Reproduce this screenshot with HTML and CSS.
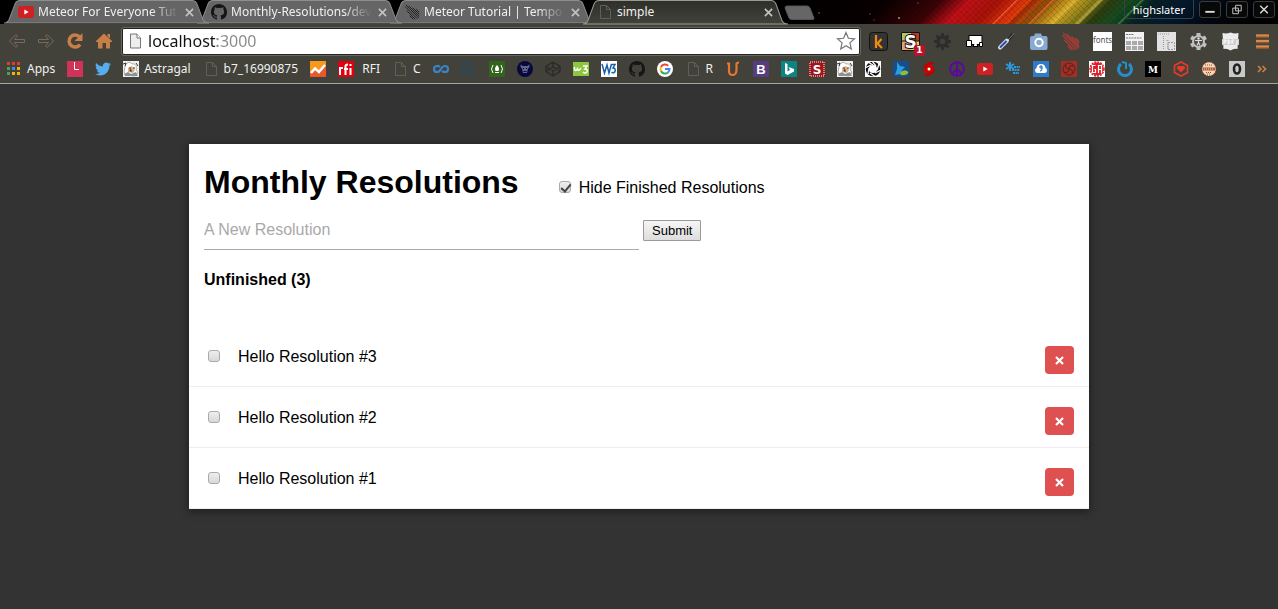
FILE: index.html
```html
<!DOCTYPE html>
<html lang="en">
<head>
<meta charset="utf-8">
<meta name="viewport" content="width=device-width, initial-scale=1">
<title>simple</title>
<link rel="stylesheet" href="styles.css">
</head>
<body>
<svg class="defs" width="0" height="0" aria-hidden="true">
  <defs>
    <linearGradient id="active-fill" x1="0" y1="0" x2="0" y2="1"><stop offset="0" stop-color="#2f2f2a"/><stop offset="1" stop-color="#42423b"/></linearGradient>
    <linearGradient id="sky" x1="0" y1="0" x2="488" y2="0" gradientUnits="userSpaceOnUse">
      <stop offset="0" stop-color="#000"/><stop offset=".2" stop-color="#080000"/><stop offset=".31" stop-color="#3a0306"/><stop offset=".37" stop-color="#c01018"/><stop offset=".43" stop-color="#a81208"/><stop offset=".49" stop-color="#e03a0c"/><stop offset=".53" stop-color="#8a4c08"/><stop offset=".58" stop-color="#d0a324"/><stop offset=".62" stop-color="#8e8018"/><stop offset=".66" stop-color="#2b3c10"/><stop offset=".7" stop-color="#174c20"/><stop offset=".75" stop-color="#072025"/><stop offset=".82" stop-color="#04172c"/><stop offset=".9" stop-color="#02070f"/><stop offset="1" stop-color="#000"/>
    </linearGradient>
    <pattern id="mesh" width="6" height="6" patternUnits="userSpaceOnUse"><path d="M0 3L3 0L6 3L3 6Z" fill="none" stroke="#000" stroke-opacity=".13"/></pattern>
    <symbol id="page" viewBox="0 0 16 16"><path d="M3.5 1.500H9.500L13.500 5.500V14.500H3.500ZM9.500 1.500V5.500H13.500" fill="none" stroke="#60605a"/></symbol>
    <symbol id="github" viewBox="0 0 16 16"><path fill="#151515" d="M8 0C3.580 0 0 3.580 0 8c0 3.540 2.290 6.530 5.470 7.590.4.070.55-.17.55-.38 0-.19-.01-.82-.01-1.490-2.010.37-2.530-.49-2.690-.94-.09-.23-.48-.94-.82-1.130-.28-.15-.68-.52-.01-.53.63-.01 1.080.58 1.230.82.72 1.210 1.870.87 2.330.66.070-.52.28-.87.51-1.070-1.780-.2-3.640-.89-3.640-3.950 0-.87.31-1.590.82-2.150-.08-.2-.36-1.020.08-2.120 0 0 .67-.21 2.200.82a7.600 7.600 0 014 0c1.530-1.040 2.200-.82 2.200-.82.44 1.100.16 1.920.08 2.120.51.56.82 1.270.82 2.150 0 3.070-1.870 3.750-3.650 3.950.29.25.54.73.54 1.480 0 1.070-.01 1.930-.01 2.200 0 .21.15.46.55.38A8.010 8.010 0 0016 8c0-4.420-3.580-8-8-8z"/></symbol>
    <symbol id="youtube" viewBox="0 0 16 16"><rect y="2" width="16" height="12" rx="2.500" fill="#cf2124"/><path d="M6.300 5.500L10.700 8L6.300 10.500Z" fill="#fff"/></symbol>
    <symbol id="meteor" viewBox="0 0 16 16"><path d="M2 1L14.500 13.500M5 2L15 12M9 4L15 10M12.500 5.500L15 8M1.500 3L13 14.500M3 7L11 15M6 12L9 15" fill="none" stroke="currentColor" stroke-linecap="round"/></symbol>
    <symbol id="close" viewBox="0 0 10 10"><path d="M1 1L9 9M9 1L1 9" fill="none" stroke="#c3c3c0" stroke-width="1.800"/></symbol>
    <symbol id="astragal" viewBox="0 0 16 16"><rect width="16" height="16" fill="#f4f2ee"/><path d="M2 6C3 1 7 0 9 3C13 2 14 6 13 8L15 12L12 15L3 14L1 11Z" fill="#fff" stroke="#777" stroke-width=".6"/><path d="M5 7L9 5L12 9L10 12L5 11Z" fill="#dcae82"/><path d="M1 13L5 11L8 13L13 11L15 15H2Z" fill="#8a919b"/><path d="M0 3L3 2L2 5M6 7H8M10 7H12M8 8L7 10H9M13 2L15 5" stroke="#222" stroke-width=".9" fill="none"/></symbol>
    <symbol id="tab-shape" viewBox="0 0 206 25" preserveAspectRatio="none"><path d="M1 24C4 24 5 22.500 6 20.500L12 4C13 1.500 14 .5 17 .5H188C191 .5 192 1.500 193 4L199 20.500C200 22.500 201 24 205 24Z"/></symbol>
  </defs>
</svg>

<header class="browser">
  <div class="tabstrip">
    <svg class="sky" viewBox="0 0 488 24" preserveAspectRatio="none" aria-hidden="true">
      <g transform="skewX(-45)"><rect x="10" width="520" height="24" fill="url(#sky)"/>
      <path d="M226 0h2v24h-2zM262 0h2v24h-2z" fill="#ff5a38" opacity=".85"/><path d="M242 0h6v24h-6z" fill="#4e0804" opacity=".3"/><path d="M284 0h3v24h-3zM308 0h5v24h-5z" fill="#ffdf62" opacity=".45"/><path d="M351 0h3v24h-3z" fill="#4c9a45" opacity=".6"/></g>
      <rect x="115" width="270" height="24" fill="url(#mesh)"/>
      <g fill="#999"><circle cx="29" cy="13" r=".7"/><circle cx="80" cy="14" r=".6"/><circle cx="109" cy="18" r="1"/><circle cx="128" cy="3" r=".6"/><circle cx="84" cy="20" r=".5"/></g>
    </svg>
    <div class="tab tab-first"><svg class="tab-bg"><use href="#tab-shape"/></svg><svg class="ico"><use href="#youtube"/></svg><span class="tab-title tab-title-long">Meteor For Everyone Tut</span><button class="tab-close" aria-label="Close tab"><svg><use href="#close"/></svg></button></div>
    <div class="tab tab-second"><svg class="tab-bg"><use href="#tab-shape"/></svg><svg class="ico"><use href="#github"/></svg><span class="tab-title tab-title-long">Monthly-Resolutions/dev</span><button class="tab-close" aria-label="Close tab"><svg><use href="#close"/></svg></button></div>
    <div class="tab"><svg class="tab-bg"><use href="#tab-shape"/></svg><svg class="ico ico-dark"><use href="#meteor"/></svg><span class="tab-title tab-title-long">Meteor Tutorial | Tempo</span><button class="tab-close" aria-label="Close tab"><svg><use href="#close"/></svg></button></div>
    <div class="tab tab-active"><svg class="tab-bg"><use href="#tab-shape"/></svg><svg class="ico"><use href="#page"/></svg><span class="tab-title">simple</span><button class="tab-close" aria-label="Close tab"><svg><use href="#close"/></svg></button></div>
    <button class="new-tab" aria-label="New tab"><svg viewBox="0 0 32 16"><path d="M3 1H23Q25 1 26 3L30 13Q30 14.500 29 14.500H8Q6 14.500 5 13L1 3Q1 1 3 1Z" fill="#666" stroke="#555"/></svg></button>
    <div class="window-controls">
      <button class="user">highslater</button>
      <button class="win" aria-label="Minimize"><svg viewBox="0 0 20 16"><path d="M5 10.500H15" stroke="#ddd" stroke-width="2"/></svg></button>
      <button class="win" aria-label="Restore"><svg viewBox="0 0 20 16"><path d="M8.500 3.500H14.500V9.500H8.500ZM5.500 6.500H11.500V12.500H5.500Z" fill="none" stroke="#ccc"/></svg></button>
      <button class="win" aria-label="Close"><svg viewBox="0 0 20 16"><path d="M6 4L14 12M14 4L6 12" stroke="#ddd" stroke-width="1.500"/></svg></button>
    </div>
  </div>

  <div class="toolbar">
    <div class="nav">
      <button aria-label="Back"><svg viewBox="0 0 18 18"><path d="M1.500 9L8 2.500L9.500 4L6.500 7.500H16.500V10.500H6.500L9.500 14L8 15.500Z" fill="none" stroke="#77695c"/></svg></button>
      <button aria-label="Forward"><svg viewBox="0 0 18 18"><path d="M16.500 9L10 2.500L8.500 4L11.500 7.500H1.500V10.500H11.500L8.500 14L10 15.500Z" fill="none" stroke="#77695c"/></svg></button>
      <button aria-label="Reload"><svg viewBox="0 0 18 18"><path d="M14 12.500A6 6 0 1 1 13.500 5" fill="none" stroke="#c87e46" stroke-width="3.500"/><path d="M16.500 1V9H8.500Z" fill="#c87e46"/></svg></button>
      <button aria-label="Home"><svg viewBox="0 0 18 18"><path d="M9 1.500L17 9V10H15V16.500H11V11H7.500V16.500H3V10H1V9ZM12.500 2H15V6.500L12.500 4Z" fill="#c87e46"/></svg></button>
    </div>
    <div class="omnibox">
      <svg class="ico" viewBox="0 0 16 16"><path d="M2.500 1H9L12.500 5V15H2.500Z" fill="#eee" stroke="#777"/><path d="M9 1V5H12.500" fill="#fff" stroke="#777"/></svg>
      <input class="url" type="text" value="localhost:3000" aria-label="Address">
      <button class="star" aria-label="Bookmark this page"><svg viewBox="0 0 20 20"><path d="M10 1.500L12.400 7.300L18.500 7.800L13.900 11.900L15.300 18L10 14.800L4.700 18L6.100 11.900L1.500 7.800L7.600 7.300Z" fill="#fff" stroke="#777" stroke-width="1.200"/></svg></button>
    </div>
    <div class="extensions">
      <button aria-label="k"><svg viewBox="0 0 19 19"><rect x=".5" y=".5" width="18" height="18" rx="3" fill="#333" stroke="#111"/><path d="M7 3V16M12.500 7L8.500 11.500L13 16" fill="none" stroke="#f08a10" stroke-width="2.200"/></svg></button>
      <button class="with-badge" aria-label="S"><svg viewBox="0 0 19 19"><path fill="#b5c45c" d="M0 0H10V9H0Z"/><path fill="#b53b2e" d="M10 0H19V9H10Z"/><path fill="#e2a477" d="M0 9H10V19H0Z"/><path fill="#e8d33c" d="M10 9H19V19H10Z"/><path d="M.5.500H18.500V18.500H.5ZM0 9H19" fill="none" stroke="#111"/><text x="9.500" y="15.500" text-anchor="middle" font-family="DejaVu Sans" font-size="17" font-weight="bold" fill="#fff" stroke="#111" stroke-width="2" paint-order="stroke">S</text></svg><span class="badge">1</span></button>
      <button aria-label="Settings"><svg viewBox="0 0 19 19"><circle cx="9.500" cy="9.500" r="4.500" fill="none" stroke="#2d2d2b" stroke-width="3.500"/><path d="M9.500 1V4M9.500 15V18M1 9.500H4M15 9.500H18M3.500 3.500L6 6M13 13L15.500 15.500M15.500 3.500L13 6M6 13L3.500 15.500" stroke="#2d2d2b" stroke-width="3"/></svg></button>
      <button aria-label="Devices"><svg viewBox="0 0 19 19"><path d="M4 3.500H17V12.500H12L13 14.500H8L9 12.500H4Z" fill="#fff" stroke="#000"/><path d="M1.500 8.500H6.500V14.500H1.500Z" fill="#fff" stroke="#000"/><path d="M14.500 10.500H17.500V14.500H14.500Z" fill="#fff" stroke="#000"/></svg></button>
      <button aria-label="Color picker"><svg viewBox="0 0 19 19"><path d="M11 8L16 2" stroke="#262626" stroke-width="3"/><path d="M9.500 9.500L17 1.500" stroke="#82868c"/><path d="M3 15.500L10 8.500" stroke="#d8dde8" stroke-width="4" stroke-linecap="round"/><path d="M3 15.500L9.500 9" stroke="#2948b4" stroke-width="2"/></svg></button>
      <button aria-label="Screenshot"><svg viewBox="0 0 19 19"><path d="M5 4L6 1.500H12L13 4H17Q18.500 4 18.500 6V16Q18.500 18 17 18H3Q1 18 1 16V6Q1 4 3 4Z" fill="#88aad0"/><circle cx="10" cy="10.500" r="3.700" fill="none" stroke="#fff" stroke-width="2"/></svg></button>
      <button class="ico-red" aria-label="Meteor"><svg><use href="#meteor"/></svg></button>
      <button aria-label="fonts"><svg viewBox="0 0 19 19"><rect width="19" height="19" fill="#fff"/><text x="9.500" y="11" text-anchor="middle" font-family="Noto Sans" font-size="8" fill="#555">fonts</text></svg></button>
      <button aria-label="New tab page"><svg viewBox="0 0 19 19"><rect width="19" height="19" fill="#f2f2f2"/><path d="M1 2.500H9M1 6H17" stroke="#777" stroke-dasharray="2 .7"/><path d="M1 9H6V13H1ZM7 9H12V13H7ZM13 9H18V13H13ZM1 14H6V18H1ZM7 14H12V18H7ZM13 14H18V18H13Z" fill="#aaa"/></svg></button>
      <button aria-label="Ruler"><svg viewBox="0 0 19 19"><rect width="19" height="19" fill="#e2e2e2"/><path d="M1 2H12M6.500 4V18M10 8V10M11 8V17" stroke="#999" stroke-dasharray="1 1"/><path d="M11 10.500H17.500V17.500H11Z" fill="none" stroke="#999" stroke-dasharray="2 1"/></svg></button>
      <button aria-label="Accessibility"><svg viewBox="0 0 19 19"><path d="M9.500 1V18M2.100 5.200L16.900 13.800M16.900 5.200L2.100 13.800" stroke="#c0c0c0" stroke-width="4"/><circle cx="9.500" cy="9.500" r="5.500" fill="#4c4c4a" stroke="#c0c0c0" stroke-width="2"/><circle cx="9.500" cy="6.500" r="1.200" fill="#ddd"/><path d="M6 8.500H13M9.500 8V10.500L8 13.500M9.500 10.500L11 13.500" fill="none" stroke="#ddd" stroke-width="1.200"/></svg></button>
      <button aria-label="PDF.JS"><svg viewBox="0 0 19 19"><path d="M1.500 1Q5.500 2 9.500 .5Q13.500 2 17.500 1L16.500 17Q13 16 9.500 18.500Q6 16 2.500 17Z" fill="#ececec"/><rect x="1" y="7" width="17" height="6" fill="#d0d0d0"/><path d="M3 12V8H5V10H3M7 8V12Q9 12 9 10T7 8M11 12V8H13M11 10H12.500M16 8V12H14.500" fill="none" stroke="#fff" stroke-width=".9"/></svg></button>
      <button aria-label="Menu"><svg viewBox="0 0 19 19"><path d="M3 4H16M3 9.500H16M3 15H16" stroke="#8a542c" stroke-width="4"/><path d="M3 3.500H16M3 9H16M3 14.500H16" stroke="#d78a4e" stroke-width="2"/></svg></button>
    </div>
  </div>

  <nav class="bookmarks" aria-label="Bookmarks">
    <a href="#"><svg class="ico" viewBox="0 0 16 16"><path d="M1 1H4V4H1ZM6 1H9V4H6ZM11 1H14V4H11Z" fill="#e33b2e"/><path d="M1 6H4V9H1ZM1 11H4V14H1Z" fill="#3da755"/><path d="M6 6H9V9H6Z" fill="#4688f1"/><path d="M11 6H14V9H11ZM6 11H9V14H6ZM11 11H14V14H11Z" fill="#f4b400"/></svg>Apps</a>
    <a href="#" aria-label="L"><svg class="ico" viewBox="0 0 16 16"><path fill="#d13358" d="M0 0H16V16H0Z"/><path d="M7.500 1V8.500H12" fill="none" stroke="#fff"/></svg></a>
    <a href="#" aria-label="Twitter"><svg class="ico" viewBox="0 0 24 24"><path fill="#55acee" d="M23.950 4.570a10 10 0 01-2.820.77 4.960 4.960 0 002.160-2.720c-.95.560-2 .96-3.130 1.190a4.920 4.920 0 00-8.380 4.480C7.690 8.090 4.070 6.130 1.640 3.160a4.820 4.820 0 00-.67 2.470c0 1.710.87 3.210 2.190 4.100a4.900 4.900 0 01-2.230-.62v.06a4.920 4.920 0 003.950 4.830 5 5 0 01-2.210.08 4.940 4.940 0 004.600 3.420A9.870 9.870 0 010 19.540a13.990 13.990 0 007.550 2.210c9.050 0 14-7.500 14-13.990l-.02-.63a10 10 0 002.460-2.550z"/></svg></a>
    <a href="#"><svg class="ico"><use href="#astragal"/></svg>Astragal</a>
    <a href="#"><svg class="ico"><use href="#page"/></svg>b7_16990875</a>
    <a href="#" aria-label="Analytics"><svg class="ico" viewBox="0 0 16 16"><path d="M0 0H16V16H0Z" fill="#f8981d"/><path d="M0 12L5 8L9 11L16 4V16H0Z" fill="#e8582a"/><path d="M1 12L5 7.500L9 11L15 4" fill="none" stroke="#fff" stroke-width="2.500"/></svg></a>
    <a href="#"><svg class="ico" viewBox="0 0 16 16"><path d="M0 0H16V16H0Z" fill="#e2000f"/><path d="M2 14V7H5M7.500 14V5Q7.500 3.500 10 3.500M6 8H10M12.500 7V14M12.500 3V5" fill="none" stroke="#fff" stroke-width="2"/></svg>&nbsp;RFI</a>
    <a href="#"><svg class="ico"><use href="#page"/></svg>C</a>
    <a href="#" aria-label="Coursera"><svg class="ico" viewBox="0 0 16 16"><path d="M7 6Q5.500 4.800 4 5A3 3 0 0 0 4 11Q6.500 11 8 8T12 5A3 3 0 0 1 12 11Q10.500 11 9 10" fill="none" stroke="#3a83c6" stroke-width="2.200"/></svg></a>
    <a href="#" aria-label="Codecademy"><svg class="ico" viewBox="0 0 16 16"><path d="M1.500 1.500H10.500V13.500H1.500ZM8 5.500H4.500V10.500H8M12 13.500H16" fill="none" stroke="#204a68" stroke-width="1.200"/></svg></a>
    <a href="#" aria-label="Free Code Camp"><svg class="ico" viewBox="0 0 16 16"><path d="M0 0H16V16H0Z" fill="#33641c"/><path d="M4 4Q1 8 4 12M12 4Q15 8 12 12M6 11.500H10" fill="none" stroke="#fff"/><path d="M8 4Q11 7 9.500 10H6.500Q5 7 8 4Z" fill="#fff"/></svg></a>
    <a href="#" aria-label="Bull"><svg class="ico" viewBox="0 0 16 16"><circle cx="8" cy="8" r="8" fill="#08083d"/><path d="M4 3Q4 5 6 5H10Q12 5 12 3Q13.500 6 11 7.500L10 12H6L5 7.500Q2.500 6 4 3Z" fill="#63638c"/><path d="M6 7.500H7M9 7.500H10M6.500 10.500H9.500" stroke="#08083d"/></svg></a>
    <a href="#" aria-label="CodePen"><svg class="ico" viewBox="0 0 16 16"><path d="M8 1L15 5.500V10.500L8 15L1 10.500V5.500ZM1 5.500L8 10L15 5.500M1 10.500L8 6L15 10.500M8 1V6M8 10V15" fill="none" stroke="#2b2b29" stroke-width="1.400"/></svg></a>
    <a href="#" aria-label="W3Schools"><svg class="ico" viewBox="0 0 16 16"><path d="M0 1H16V15H0Z" fill="#8dc63f"/><path d="M1.500 6V8.500Q3 10.500 4.500 8V6.500V8.500Q6 10.500 8 7M10 5H14L12 8Q15 8 14 11Q12 13 10 11" fill="none" stroke="#fff" stroke-width="1.500"/></svg></a>
    <a href="#" aria-label="W3C"><svg class="ico" viewBox="0 0 16 16"><path fill="#fff" d="M0 0H16V16H0Z"/><path d="M1 3L3.500 12L6 4L8 12L10.500 3M10.500 3.500H14L12 7Q15 7 14 10.500Q12.500 13 10.500 11" fill="none" stroke="#1761a8" stroke-width="1.500"/></svg></a>
    <a href="#" aria-label="GitHub"><svg class="ico"><use href="#github"/></svg></a>
    <a href="#" aria-label="Google"><svg class="ico" viewBox="0 0 16 16"><circle cx="8" cy="8" r="8" fill="#fff"/><g fill="none" stroke-width="2"><path d="M11.200 4.800A4.500 4.500 0 0 0 4 6" stroke="#ea4335"/><path d="M4 6A4.500 4.500 0 0 0 4 10" stroke="#fbbc05"/><path d="M4 10A4.500 4.500 0 0 0 11 11.400" stroke="#34a853"/><path d="M8 8H12.500Q12.500 10 11 11.400" stroke="#4285f4"/></g></svg></a>
    <a href="#"><svg class="ico"><use href="#page"/></svg>R</a>
    <a href="#" aria-label="Udemy"><svg class="ico" viewBox="0 0 16 16"><path d="M2 2.500H4V10Q4 14 7.500 14T11.500 9.500V3Q11.500 1.500 14 1.500" fill="none" stroke="#e8762c" stroke-width="2.200"/></svg></a>
    <a href="#" aria-label="Bootstrap"><svg class="ico" viewBox="0 0 16 16"><rect width="16" height="16" rx="1" fill="#573d7f"/><text x="8" y="12.500" text-anchor="middle" font-family="Liberation Sans" font-size="13" font-weight="bold" fill="#fff">B</text></svg></a>
    <a href="#" aria-label="Bing"><svg class="ico" viewBox="0 0 16 16"><path fill="#0c8484" d="M0 0H16V16H0Z"/><path d="M4 2L6.500 3V10.500L9 9L7.500 6L13 8V10.500L6.500 14L4 12.500Z" fill="#fff"/></svg></a>
    <a href="#" aria-label="S"><svg class="ico" viewBox="0 0 16 16"><path fill="#9d161c" d="M0 0H16V16H0Z"/><path d="M1 1H15V15H1Z" fill="none" stroke="#deb1ac" stroke-width="1.500" stroke-dasharray="1 1"/><text x="8" y="12.500" text-anchor="middle" font-family="DejaVu Sans" font-size="12" font-weight="bold" fill="#fff">S</text></svg></a>
    <a href="#" aria-label="Astragal"><svg class="ico"><use href="#astragal"/></svg></a>
    <a href="#" aria-label="Aperture"><svg class="ico" viewBox="0 0 16 16"><path fill="#fff" d="M0 0H16V16H0Z"/><circle cx="8" cy="8" r="5.700" fill="none" stroke="#111" stroke-width="3.200"/><path d="M7 0L11 5M14 3L12 9M16 9L10 12M11 16L5 12M3 13L4 7M0 7L6 4M3 1L8 4" stroke="#fff" stroke-width="1.300"/></svg></a>
    <a href="#" aria-label="Bird"><svg class="ico" viewBox="0 0 16 16"><path fill="#144f8d" d="M0 0H16V16H0Z"/><path d="M4 1L7 5L12 6L9 9L8 13L2 14L4 8Z" fill="#2d9de0"/><path d="M7 12Q11 7 15.500 11Q14 15 8 14Z" fill="#8cbe3a"/></svg></a>
    <a href="#" aria-label="Storm"><svg class="ico" viewBox="0 0 16 16"><circle cx="8" cy="8" r="5" fill="#d40000"/><path d="M12.500 2Q6 0 2.500 7Q6 3 12.500 2ZM3.500 14Q10 16 13.500 9Q10 13 3.500 14Z" fill="#c00000" stroke="#c00000"/><circle cx="8" cy="8" r="1.500" fill="#fff"/></svg></a>
    <a href="#" aria-label="Peace"><svg class="ico" viewBox="0 0 16 16"><path d="M8 1V15M8 8L3 13M8 8L13 13" stroke="#5a0a9c" stroke-width="2"/><circle cx="8" cy="8" r="6.800" fill="none" stroke="#5a0a9c" stroke-width="2"/></svg></a>
    <a href="#" aria-label="YouTube"><svg class="ico"><use href="#youtube"/></svg></a>
    <a href="#" aria-label="Flower"><svg class="ico" viewBox="0 0 16 16"><path d="M5 1V10M1 3L9 8M1 8L9 3" stroke="#2a98db" stroke-width="2"/><path d="M9 6H15M7 9H15M8 12H14" stroke="#2a98db" stroke-width="2.200" stroke-dasharray="2 .6"/></svg></a>
    <a href="#" aria-label="Cloud 9"><svg class="ico" viewBox="0 0 16 16"><path fill="#2e7bcb" d="M0 0H16V16H0Z"/><path d="M4 12A2.700 2.700 0 0 1 3.500 7Q4 3 8 3T12.500 7A2.700 2.700 0 0 1 12 12Z" fill="#fff"/><path d="M9 7H7V5H9V8Q9 10 7 10" fill="none" stroke="#1964af"/></svg></a>
    <a href="#" aria-label="Spiral"><svg class="ico" viewBox="0 0 16 16"><path fill="#a52d24" d="M0 0H16V16H0Z"/><circle cx="8" cy="8" r="6" fill="none" stroke="#58251f"/><path d="M8 8Q3 7 5 3M8 8Q9 3 13 5M8 8Q13 9 11 13M8 8Q7 13 3 11" fill="none" stroke="#58251f" stroke-width="1.200"/></svg></a>
    <a href="#" aria-label="GA"><svg class="ico" viewBox="0 0 16 16"><path fill="#fff" d="M0 0H16V16H0Z"/><circle cx="8" cy="8" r="6.500" fill="#de1e26"/><circle cx="8" cy="8" r="7" fill="none" stroke="#de1e26" stroke-width="1.500" stroke-dasharray="2 1"/><path d="M6.500 4.500H3.500V11.500H6.500V8.500H5.500M9.500 12V4.500H12.500V12M9.500 8.500H12.500" fill="none" stroke="#fff" stroke-width="1.200"/></svg></a>
    <a href="#" aria-label="Power"><svg class="ico" viewBox="0 0 16 16"><path d="M4 3A6.500 6.500 0 1 0 12 3" fill="none" stroke="#2290cb" stroke-width="3"/><path d="M5 1L9 2V8" fill="none" stroke="#2290cb" stroke-width="2"/></svg></a>
    <a href="#" aria-label="M"><svg class="ico" viewBox="0 0 16 16"><path fill="#000" d="M0 0H16V16H0Z"/><text x="8" y="11.500" text-anchor="middle" font-family="DejaVu Serif" font-size="9" font-weight="bold" fill="#fff">M</text></svg></a>
    <a href="#" aria-label="Gem"><svg class="ico" viewBox="0 0 16 16"><path d="M8 1L14.500 4.500V11.500L8 15L1.500 11.500V4.500Z" fill="none" stroke="#e43b2e" stroke-width="1.600"/><path d="M5 5H11L12.500 7L8 11.500L3.500 7Z" fill="#e43b2e"/></svg></a>
    <a href="#" aria-label="Seal"><svg class="ico" viewBox="0 0 16 16"><circle cx="8" cy="8" r="7" fill="#f0d9b8" stroke="#8e3824" stroke-dasharray="1 1"/><path d="M4 4H12M5 11.500H11M6 13H10" stroke="#a34a32" stroke-dasharray="1 1"/><path d="M2 6.500H14V9.500H2Z" fill="#b65439"/><path d="M3 8H13" stroke="#f0d9b8" stroke-dasharray="1 1"/></svg></a>
    <a href="#" aria-label="O"><svg class="ico" viewBox="0 0 16 16"><path fill="#c9c9c9" d="M0 0H16V16H0Z"/><ellipse cx="8" cy="8" rx="3" ry="4.500" fill="none" stroke="#222" stroke-width="2.600"/></svg></a>
    <button class="overflow" aria-label="More bookmarks"><svg viewBox="0 0 10 8"><path d="M1 1L4 4L1 7M5.500 1L8.500 4L5.500 7" fill="none" stroke="#cd8148" stroke-width="1.600"/></svg></button>
  </nav>
</header>

<main class="card">
  <div class="card-head">
    <div class="title-row">
      <h1>Monthly Resolutions</h1>
      <label class="hide-finished"><input class="check" type="checkbox" checked><span>Hide Finished Resolutions</span></label>
    </div>
    <form class="new-resolution">
      <input class="new-input" type="text" placeholder="A New Resolution" aria-label="A New Resolution">
      <button class="submit" type="button">Submit</button>
    </form>
    <h2>Unfinished (3)</h2>
  </div>
  <ul class="list">
    <li><label><input class="check" type="checkbox"><span>Hello Resolution #3</span></label><button class="delete" aria-label="Delete"><svg viewBox="0 0 9 9"><path d="M1 1L8 8M8 1L1 8" stroke="#fff" stroke-width="2.200"/></svg></button></li>
    <li><label><input class="check" type="checkbox"><span>Hello Resolution #2</span></label><button class="delete" aria-label="Delete"><svg viewBox="0 0 9 9"><path d="M1 1L8 8M8 1L1 8" stroke="#fff" stroke-width="2.200"/></svg></button></li>
    <li><label><input class="check" type="checkbox"><span>Hello Resolution #1</span></label><button class="delete" aria-label="Delete"><svg viewBox="0 0 9 9"><path d="M1 1L8 8M8 1L1 8" stroke="#fff" stroke-width="2.200"/></svg></button></li>
  </ul>
</main>
</body>
</html>
```

FILE: styles.css
```css
* { box-sizing: border-box; }
body { margin: 0; background: #333; font: 16px/18px "Liberation Sans", Arial, sans-serif; color: #000; }
button { margin: 0; padding: 0; border: 0; background: none; font: inherit; color: inherit; }
svg { display: block; flex: none; }
.defs { position: absolute; }
.ico { width: 16px; height: 16px; }
.ico-dark { color: #222; }
.ico-red { color: #b33a36; }

.browser { background: #42423b; border-bottom: 1px solid #a5a5a2; font: 12px/16px "Noto Sans", sans-serif; color: #f0f0ee; }

/* Tabs */
.tabstrip { position: relative; isolation: isolate; display: flex; height: 24px; padding-left: 3px; background: #000; }
.sky { position: absolute; z-index: -1; right: 0; top: 0; width: 488px; height: 24px; }
.tab { position: relative; flex: 0 1 207px; min-width: 0; display: flex; align-items: center; gap: 4px; padding: 0 14px 0 15px; margin-right: -14px; z-index: 1; }
.tab-first { z-index: 3; }
.tab-second { z-index: 2; }
.tab-bg { position: absolute; z-index: -1; left: 0; top: 0; width: 100%; height: 24px; fill: #656565; stroke: #8e8e8e; }
.tab-active { z-index: 4; }
.tab-active .tab-bg { height: 25px; fill: url(#active-fill); stroke: #9a9a95; }
.tab-title { flex: 1; overflow: hidden; white-space: nowrap; }
.tab-title-long { mask-image: linear-gradient(90deg, #000 80%, transparent); }
.tab-close { padding: 3px 2px; }
.tab-close svg { width: 9px; height: 9px; }
.new-tab { margin: 0 auto 0 9px; padding-top: 1px; }
.new-tab svg { width: 32px; height: 16px; }
.window-controls { display: flex; align-items: flex-start; gap: 5px; padding-right: 3px; }
.user { height: 19px; padding: 0 8px; font-size: 11px; line-height: 19px; border: 1px solid #34404a; border-top: 0; border-radius: 0 0 4px 4px; color: #fff; }
.win { width: 22px; height: 17px; margin-top: 1px; border: 1px solid #3c3c3c; border-radius: 3px; background: #080808; }
.win svg { width: 20px; height: 15px; }

/* Toolbar */
.toolbar { display: flex; align-items: center; height: 34px; padding-right: 6px; }
.nav { display: flex; gap: 11px; padding: 0 9px 0 8px; }
.nav svg { width: 18px; height: 18px; }
.omnibox { flex: 1; display: flex; align-items: center; height: 27px; padding: 0 3px 0 5px; margin-right: 9px; background: #fff; border: 1px solid #23231f; outline: 1px solid #66665e; border-radius: 2px; }
.url { flex: 1; min-width: 0; padding: 0 0 0 4px; border: 0; outline: 0; font: 16px/22px "Noto Sans", sans-serif; color: #111; background: linear-gradient(90deg, #111 73px, #888 73px); background-clip: text; -webkit-background-clip: text; -webkit-text-fill-color: transparent; }
.star svg { width: 20px; height: 20px; }
.extensions { display: flex; gap: 13px; }
.extensions svg { width: 19px; height: 19px; }
.with-badge { position: relative; }
.badge { position: absolute; right: -5px; bottom: -5px; width: 11px; height: 11px; border-radius: 2px; background: #b8122c; color: #fff; font: bold 9px/11px "DejaVu Sans", sans-serif; text-align: center; }

/* Bookmarks */
.bookmarks { display: flex; align-items: center; gap: 12px; height: 25px; padding: 0 6px 3px; white-space: nowrap; overflow: hidden; }
.bookmarks a { display: flex; align-items: center; gap: 5px; color: inherit; text-decoration: none; }
.overflow svg { width: 10px; height: 8px; }

/* Page */
.card { max-width: 900px; margin: 60px auto; background: #fff; box-shadow: 0 2px 8px 1px rgba(0, 0, 0, .4); }
.card-head { padding: 20px 15px 0; }
.title-row { display: flex; align-items: center; gap: 40px; }
h1 { margin: 0; font-size: 32px; line-height: 36px; }
h2 { margin: 0; padding: 21px 0 37px; font-size: 16px; line-height: 18px; }
label { display: flex; align-items: center; }
.hide-finished { gap: 8px; padding-top: 12px; }
.check { appearance: none; width: 12px; height: 12px; margin: 0 0 3px; border: 1px solid #aaa; border-radius: 3px; background: linear-gradient(#eee, #d8d8d8); }
.check:checked::after { content: ""; display: block; width: 4px; height: 8px; margin: 0 0 0 3px; border: solid #444; border-width: 0 2px 2px 0; transform: rotate(40deg); }
.new-resolution { display: flex; align-items: center; gap: 4px; padding-top: 9px; }
.new-input { width: 50%; height: 41px; padding: 2px 0 0; border: 0; border-bottom: 1px solid #aaa; outline: 0; border-radius: 0; background: none; font: inherit; }
.new-input::placeholder { color: #a9a9a9; }
.submit { height: 21px; margin-top: 2px; padding: 0 8px; border: 1px solid #999; border-radius: 1px; background: linear-gradient(#f6f6f6, #ddd); font-size: 13px; line-height: 19px; }
.list { margin: 0; padding: 0; list-style: none; }
.list li { display: flex; align-items: flex-start; justify-content: space-between; padding: 20px 15px 12px; border-bottom: 1px solid #eee; }
.list label { gap: 18px; padding: 2px 0 0 4px; }
.delete { display: grid; place-items: center; width: 29px; height: 28px; border-radius: 4px; background: #df5050; }
.delete svg { width: 9px; height: 9px; }
```
